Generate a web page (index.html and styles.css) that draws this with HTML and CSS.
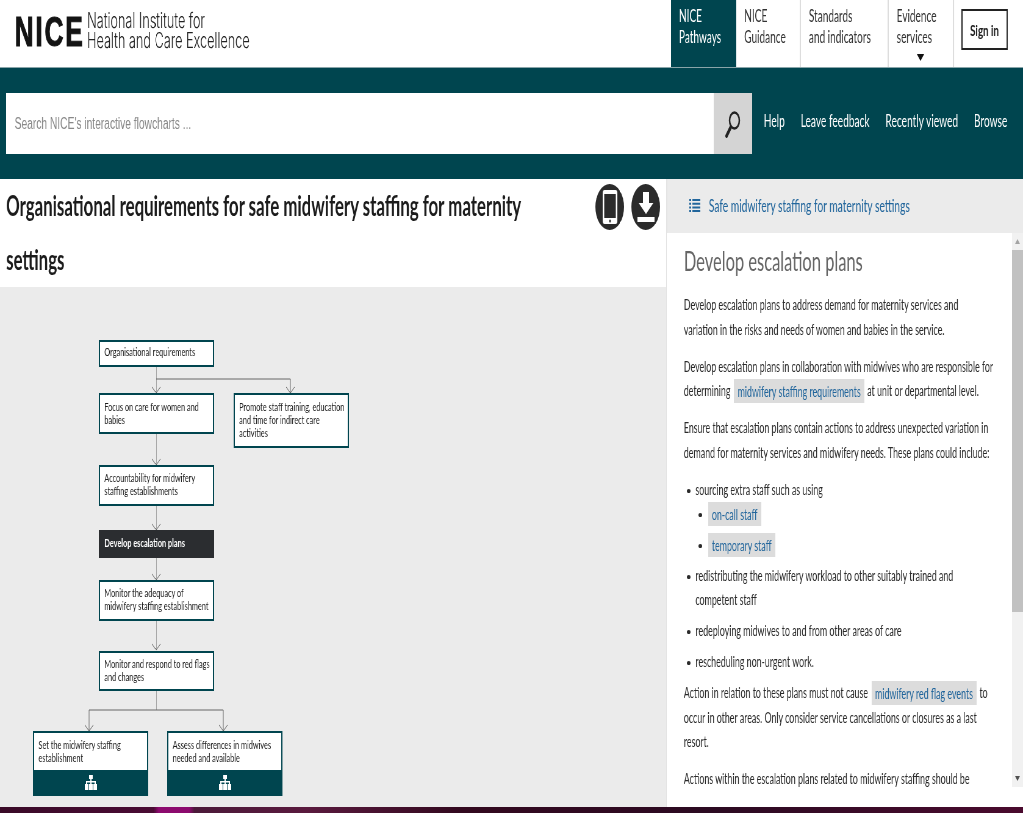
FILE: index.html
```html
<!DOCTYPE html>
<html lang="en">
<head>
    <meta charset="UTF-8">
    <meta name="viewport" content="width=device-width, initial-scale=1.0">
    <title>Organisational requirements for safe midwifery staffing | NICE Pathways</title>
    <link rel="stylesheet" href="styles.css">
</head>
<body>
<div class="page">
    <header class="top">
        <div class="logo">
            <span class="logo-mark">NICE</span>
            <span class="logo-name">National Institute for<br>Health and Care Excellence</span>
        </div>
        <nav class="main-nav">
            <a class="nav-item active" href="#">NICE<br>Pathways</a>
            <a class="nav-item" href="#">NICE<br>Guidance</a>
            <a class="nav-item" href="#">Standards<br>and indicators</a>
            <a class="nav-item" href="#">Evidence<br>services<span class="caret"></span></a>
            <div class="signin-wrap"><a class="signin" href="#">Sign in</a></div>
        </nav>
    </header>

    <section class="searchbar">
        <form class="search">
            <input class="search-input" type="text" placeholder="Search NICE's interactive flowcharts ...">
            <button class="search-btn" type="button" aria-label="Search">
                <svg width="30" height="28" viewBox="0 0 30 28"><circle cx="17" cy="10.500" r="8" fill="none" stroke="#222" stroke-width="2.500"/><path d="M11 17 L4 26" stroke="#222" stroke-width="4" stroke-linecap="round"/></svg>
            </button>
        </form>
        <div class="search-links">
            <a href="#">Help</a>
            <a href="#">Leave feedback</a>
            <a href="#">Recently viewed</a>
            <a href="#">Browse</a>
        </div>
    </section>

    <main class="content">
        <section class="left">
            <div class="title-row">
                <h1>Organisational requirements for safe midwifery staffing for maternity settings</h1>
                <div class="title-icons">
                    <a class="round-icon" href="#" aria-label="Mobile">
                        <svg width="26" height="34" viewBox="0 0 26 34"><rect x="1" y="0" width="24" height="34" rx="3" fill="#fff"/><rect x="3.500" y="4" width="19" height="24" fill="#2b2b2b"/><circle cx="13" cy="31" r="1.500" fill="#2b2b2b"/></svg>
                    </a>
                    <a class="round-icon" href="#" aria-label="Download">
                        <svg width="32" height="30" viewBox="0 0 32 30"><path d="M11 0 H21 V11 H28 L16 22 L4 11 H11 Z" fill="#fff"/><rect x="2" y="25" width="28" height="5" fill="#fff"/></svg>
                    </a>
                </div>
            </div>
            <div class="flow">
                <svg class="links" width="1092" height="520" viewBox="0 0 1092 520">
                    <g fill="none" stroke="#666" stroke-width="1">
                        <path d="M256 80 V106 M256 92 H476 V106"/>
                        <path d="M249 100 L256 106 L263 100 M469 100 L476 106 L483 100"/>
                        <path d="M256 147 V178 M249 172 L256 178 L263 172"/>
                        <path d="M256 219 V243 M249 237 L256 243 L263 237"/>
                        <path d="M256 270 V293 M249 287 L256 293 L263 287"/>
                        <path d="M256 334 V363 M249 357 L256 363 L263 357"/>
                        <path d="M256 404 V423 M146 423 H366 M146 423 V444 M366 423 V444"/>
                        <path d="M139 438 L146 444 L153 438 M359 438 L366 444 L373 438"/>
                    </g>
                </svg>
                <a class="node n-org" href="#">Organisational requirements</a>
                <a class="node n-focus" href="#">Focus on care for women and babies</a>
                <a class="node n-promote" href="#">Promote staff training, education and time for indirect care activities</a>
                <a class="node n-account" href="#">Accountability for midwifery staffing establishments</a>
                <a class="node n-develop current" href="#">Develop escalation plans</a>
                <a class="node n-adequacy" href="#">Monitor the adequacy of midwifery staffing establishment</a>
                <a class="node n-respond" href="#">Monitor and respond to red flags and changes</a>
                <a class="node has-foot n-set" href="#">
                    <span class="node-text">Set the midwifery staffing establishment</span>
                    <span class="node-foot"><svg width="20" height="15" viewBox="0 0 20 15"><path d="M7 0 H13 V4 H11 V6 H18 V9 H20 V15 H14 V9 H16 V7.500 H11 V9 H13 V15 H7 V9 H9 V7.500 H4 V9 H6 V15 H0 V9 H2 V6 H9 V4 H7 Z" fill="#fff"/></svg></span>
                </a>
                <a class="node has-foot n-assess" href="#">
                    <span class="node-text">Assess differences in midwives needed and available</span>
                    <span class="node-foot"><svg width="20" height="15" viewBox="0 0 20 15"><path d="M7 0 H13 V4 H11 V6 H18 V9 H20 V15 H14 V9 H16 V7.500 H11 V9 H13 V15 H7 V9 H9 V7.500 H4 V9 H6 V15 H0 V9 H2 V6 H9 V4 H7 Z" fill="#fff"/></svg></span>
                </a>
            </div>
        </section>

        <aside class="right">
            <div class="right-head">
                <svg width="18" height="13" viewBox="0 0 18 13"><path d="M0 0 H3 V2 H0 Z M5 0 H18 V2 H5 Z M0 3.700 H3 V5.700 H0 Z M5 3.700 H18 V5.700 H5 Z M0 7.400 H3 V9.400 H0 Z M5 7.400 H18 V9.400 H5 Z M0 11 H3 V13 H0 Z M5 11 H18 V13 H5 Z" fill="#22669c"/></svg>
                <a href="#">Safe midwifery staffing for maternity settings</a>
            </div>
            <div class="right-body">
                <article class="text">
                    <h2>Develop escalation plans</h2>
                    <p>Develop escalation plans to address demand for maternity services and<br>variation in the risks and needs of women and babies in the service.</p>
                    <p>Develop escalation plans in collaboration with midwives who are responsible for determining <a class="tag" href="#">midwifery staffing requirements</a> at unit or departmental level.</p>
                    <p>Ensure that escalation plans contain actions to address unexpected variation in demand for maternity services and midwifery needs. These plans could include:</p>
                    <ul>
                        <li>sourcing extra staff such as using
                            <ul>
                                <li><a class="tag first" href="#">on-call staff</a></li>
                                <li><a class="tag first" href="#">temporary staff</a></li>
                            </ul>
                        </li>
                        <li>redistributing the midwifery workload to other suitably trained and competent staff</li>
                        <li>redeploying midwives to and from other areas of care</li>
                        <li>rescheduling non-urgent work.</li>
                    </ul>
                    <p>Action in relation to these plans must not cause <a class="tag" href="#">midwifery red flag events</a> to occur in other areas. Only consider service cancellations or closures as a last resort.</p>
                    <p>Actions within the escalation plans related to midwifery staffing should be</p>
                </article>
                <div class="scrollbar">
                    <span class="arrow up"></span>
                    <span class="thumb"></span>
                    <span class="arrow down"></span>
                </div>
            </div>
        </aside>
    </main>
    <div class="strip"></div>
</div>
</body>
</html>
```

FILE: styles.css
```css
/* the whole page is narrowed sideways, as in the screenshot */
html, body {
    margin: 0;
    height: 813px;
    overflow: hidden;
    background: #fff;
}

.page {
    width: 1677px;
    height: 813px;
    transform: scaleX(0.61);
    transform-origin: 0 0;
    will-change: transform;
    font-family: Lato, "Open Sans", sans-serif;
    color: #222;
}

a {
    text-decoration: none;
    color: inherit;
}

/* header */
.top {
    height: 67px;
    display: flex;
    justify-content: space-between;
    background: #fff;
    border-bottom: 1px solid #8aa5a9;
}

.logo {
    display: flex;
    align-items: center;
    padding: 0 0 5px 24px;
}

.logo-mark {
    font-family: "Liberation Sans", sans-serif;
    font-size: 43px;
    font-weight: bold;
    letter-spacing: 3px;
    color: #141414;
    margin-right: 4px;
    -webkit-text-stroke: 1px #141414;
}

.logo-name {
    font-family: Inter, sans-serif;
    font-weight: 300;
    font-size: 20.800px;
    line-height: 20.500px;
    color: #222;
}

.main-nav {
    display: flex;
    width: 577px;
}

.nav-item {
    position: relative;
    box-sizing: border-box;
    padding: 6px 12px 0 13px;
    font-size: 16.500px;
    line-height: 21px;
    color: #333;
    border-right: 2px solid #ddd;
    height: 67px;
}

.nav-item:nth-child(1) { width: 107px; }
.nav-item:nth-child(2) { width: 106px; }
.nav-item:nth-child(3) { width: 144px; }
.nav-item:nth-child(4) { width: 107px; }

.nav-item.active {
    background: #00454f;
    color: #fff;
    border-right: 0;
}

.caret {
    position: absolute;
    left: 46px;
    top: 54px;
    border-left: 6px solid transparent;
    border-right: 6px solid transparent;
    border-top: 7px solid #111;
}

.signin-wrap {
    padding: 9px 0 0 12px;
}

.signin {
    display: block;
    box-sizing: border-box;
    width: 76px;
    height: 41px;
    line-height: 37px;
    text-align: center;
    font-size: 16px;
    font-weight: bold;
    color: #222;
    border: 2px solid #222;
}

/* search band */
.searchbar {
    height: 111px;
    box-sizing: border-box;
    background: #00454f;
    display: flex;
    padding: 25px 0 0 10px;
}

.search {
    display: flex;
    width: 1223px;
    height: 61px;
}

.search-input {
    flex: 1;
    box-sizing: border-box;
    border: 0;
    padding: 0 0 0 14px;
    font-family: "Liberation Sans", Arial, sans-serif;
    font-size: 16.800px;
    color: #777;
}

.search-input::placeholder {
    color: #888;
    opacity: 1;
}

.search-btn {
    width: 63px;
    border: 0;
    padding: 0;
    background: #d4d4d4;
    display: flex;
    align-items: center;
    justify-content: center;
}

.search-links {
    display: flex;
    gap: 26px;
    padding: 18px 0 0 19px;
    font-size: 16.700px;
    line-height: 20px;
    color: #fff;
}

/* main area */
.content {
    display: grid;
    grid-template-columns: 1092px 585px;
    height: 628px;
    overflow: hidden;
}

.left {
    background: #ebebeb;
    display: flex;
    flex-direction: column;
}

.title-row {
    height: 108px;
    box-sizing: border-box;
    display: flex;
    justify-content: space-between;
    padding: 0 10px;
    background: #fff;
}

h1 {
    margin: 0;
    width: 880px;
    font-size: 27.600px;
    font-weight: 700;
    line-height: 54px;
    color: #1c1c1c;
}

.title-icons {
    display: flex;
    gap: 12px;
    padding-top: 5px;
}

.round-icon {
    width: 47px;
    height: 46px;
    border-radius: 50%;
    background: #2b2b2b;
    display: flex;
    align-items: center;
    justify-content: center;
}

/* flowchart: boxes sit at their own places on the canvas */
.flow {
    position: relative;
    flex: 1;
}

.links {
    position: absolute;
    left: 0;
    top: 0;
}

.node {
    position: absolute;
    box-sizing: border-box;
    left: 162px;
    width: 189px;
    padding: 5px 2px 0 7px;
    background: #fff;
    border: 2px solid #00454f;
    font-size: 12px;
    line-height: 13.200px;
    color: #1c1c1c;
}

.n-org { top: 53px; height: 27px; padding-top: 3px; }
.n-focus { top: 106px; height: 41px; }
.n-promote { top: 106px; left: 383px; height: 55px; }
.n-account { top: 178px; height: 41px; padding-top: 4px; }
.n-develop { top: 243px; height: 28px; padding-top: 4px; }
.n-adequacy { top: 293px; height: 41px; padding-top: 4px; }
.n-respond { top: 364px; height: 40px; padding-top: 4px; }
.n-set { top: 444px; left: 54px; height: 65px; }
.n-assess { top: 444px; left: 274px; height: 65px; }

.node.current {
    background: #2b2d30;
    border-color: #2b2d30;
    color: #fff;
    font-weight: bold;
}

.node.has-foot {
    display: flex;
    flex-direction: column;
    padding: 0;
}

.node-text {
    height: 37px;
    padding: 5px 2px 0 7px;
    box-sizing: border-box;
}

.node-foot {
    flex: 1;
    background: #00454f;
    display: flex;
    align-items: center;
    justify-content: center;
}

/* right column */
.right {
    display: flex;
    flex-direction: column;
    border-left: 2px solid #e4e4e4;
    box-sizing: border-box;
    min-height: 0;
}

.right-head {
    height: 54px;
    flex: none;
    background: #ebebeb;
    display: flex;
    align-items: center;
    gap: 14px;
    padding: 0 0 2px 36px;
    box-sizing: border-box;
    font-size: 16.800px;
    color: #22669c;
}

.right-body {
    flex: 1;
    min-height: 0;
    display: flex;
    background: #fff;
}

.text {
    flex: 1;
    min-width: 0;
    padding: 0 28px 0 27px;
    overflow: hidden;
    font-size: 14.500px;
    line-height: 24.500px;
    color: #2b2b2b;
}

h2 {
    margin: 12px 0 16px;
    font-size: 27px;
    font-weight: 400;
    line-height: 32px;
    color: #666;
}

.text p {
    margin: 0 0 12.500px;
}

.text ul {
    margin: 0 0 5px;
    padding: 0 0 0 19px;
    list-style: none;
}

.text li {
    position: relative;
    margin-bottom: 6.500px;
}

.text li::before {
    content: "";
    position: absolute;
    left: -14px;
    top: 11px;
    width: 6px;
    height: 4px;
    border-radius: 50%;
    background: #2b2b2b;
}

.text li ul {
    margin: 0 0 -0.500px;
    padding-left: 22px;
}

.text li li::before {
    left: -17px;
}

.tag {
    background: #dcdcdc;
    color: #22669c;
    padding: 3.500px 6px;
    margin: 0 1px 0 2px;
}

.tag.first {
    margin-left: -1px;
}

.scrollbar {
    flex: none;
    width: 18px;
    height: 554px;
    background: #f1f1f1;
    display: flex;
    flex-direction: column;
    align-items: stretch;
}

.arrow {
    height: 17px;
    flex: none;
    position: relative;
}

.arrow::after {
    content: "";
    position: absolute;
    left: 5px;
    top: 6px;
    border-left: 4px solid transparent;
    border-right: 4px solid transparent;
}

.arrow.up::after { border-bottom: 5px solid #a3a3a3; }
.arrow.down::after { border-top: 5px solid #505050; }

.thumb {
    height: 362px;
    background: #c1c1c1;
    margin-bottom: auto;
}

.strip {
    height: 6px;
    background: linear-gradient(90deg, #3a0a28 0, #4a0c34 15%, #8c0a6e 15.500%, #8c0a6e 18.500%, #4c1a3a 19%, #5a1a3e 30%, #33091f 45%, #2c0a22 70%, #4a0a2e 100%);
}
```
